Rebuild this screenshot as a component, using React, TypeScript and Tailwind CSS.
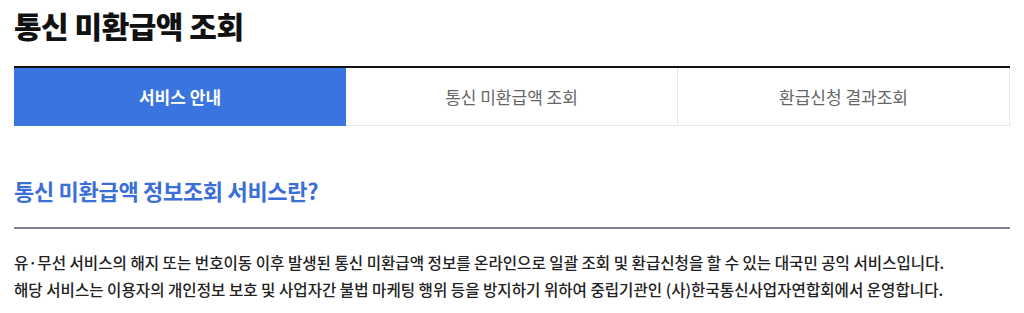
import React from "react";

export default function App() {
  const tabs = ["서비스 안내", "통신 미환급액 조회", "환급신청 결과조회"];
  return (
    <div
      className="w-[1024px] h-[313px] bg-white overflow-hidden"
      style={{ fontFamily: '"Noto Sans CJK KR", "Noto Sans", sans-serif' }}
    >
      <div className="ml-[14px] w-[996px]">
        <h1 className="pt-[4px] text-[30px] leading-[42px] font-black text-[#111] tracking-[-0.5px]">
          통신 미환급액 조회
        </h1>
        <div className="mt-[20px] border-t-2 border-[#111] grid grid-cols-3">
          {tabs.map((t, i) =>
            i === 0 ? (
              <div
                key={t}
                className="h-[58px] flex items-center justify-center bg-[#3a74df] text-white text-[17px] font-bold"
              >
                {t}
              </div>
            ) : (
              <div
                key={t}
                className="h-[58px] flex items-center justify-center border border-t-0 border-l-0 border-[#e3e7ee] text-[#666] text-[17px]"
              >
                {t}
              </div>
            )
          )}
        </div>
        <h2 className="mt-[48px] text-[22px] leading-[32px] font-bold text-[#3a6fd8] tracking-[-0.3px]">
          통신 미환급액 정보조회 서비스란?
        </h2>
        <div className="mt-[21px] h-[2px] bg-[#7d838b]" />
        <div className="mt-[20px] text-[15.6px] leading-[27px] font-medium text-[#222]">
          <p>
            유·무선 서비스의 해지 또는 번호이동 이후 발생된 통신 미환급액 정보를 온라인으로 일괄 조회 및 환급신청을 할 수 있는 대국민 공익 서비스입니다.
          </p>
          <p>
            해당 서비스는 이용자의 개인정보 보호 및 사업자간 불법 마케팅 행위 등을 방지하기 위하여 중립기관인 (사)한국통신사업자연합회에서 운영합니다.
          </p>
        </div>
      </div>
    </div>
  );
}
